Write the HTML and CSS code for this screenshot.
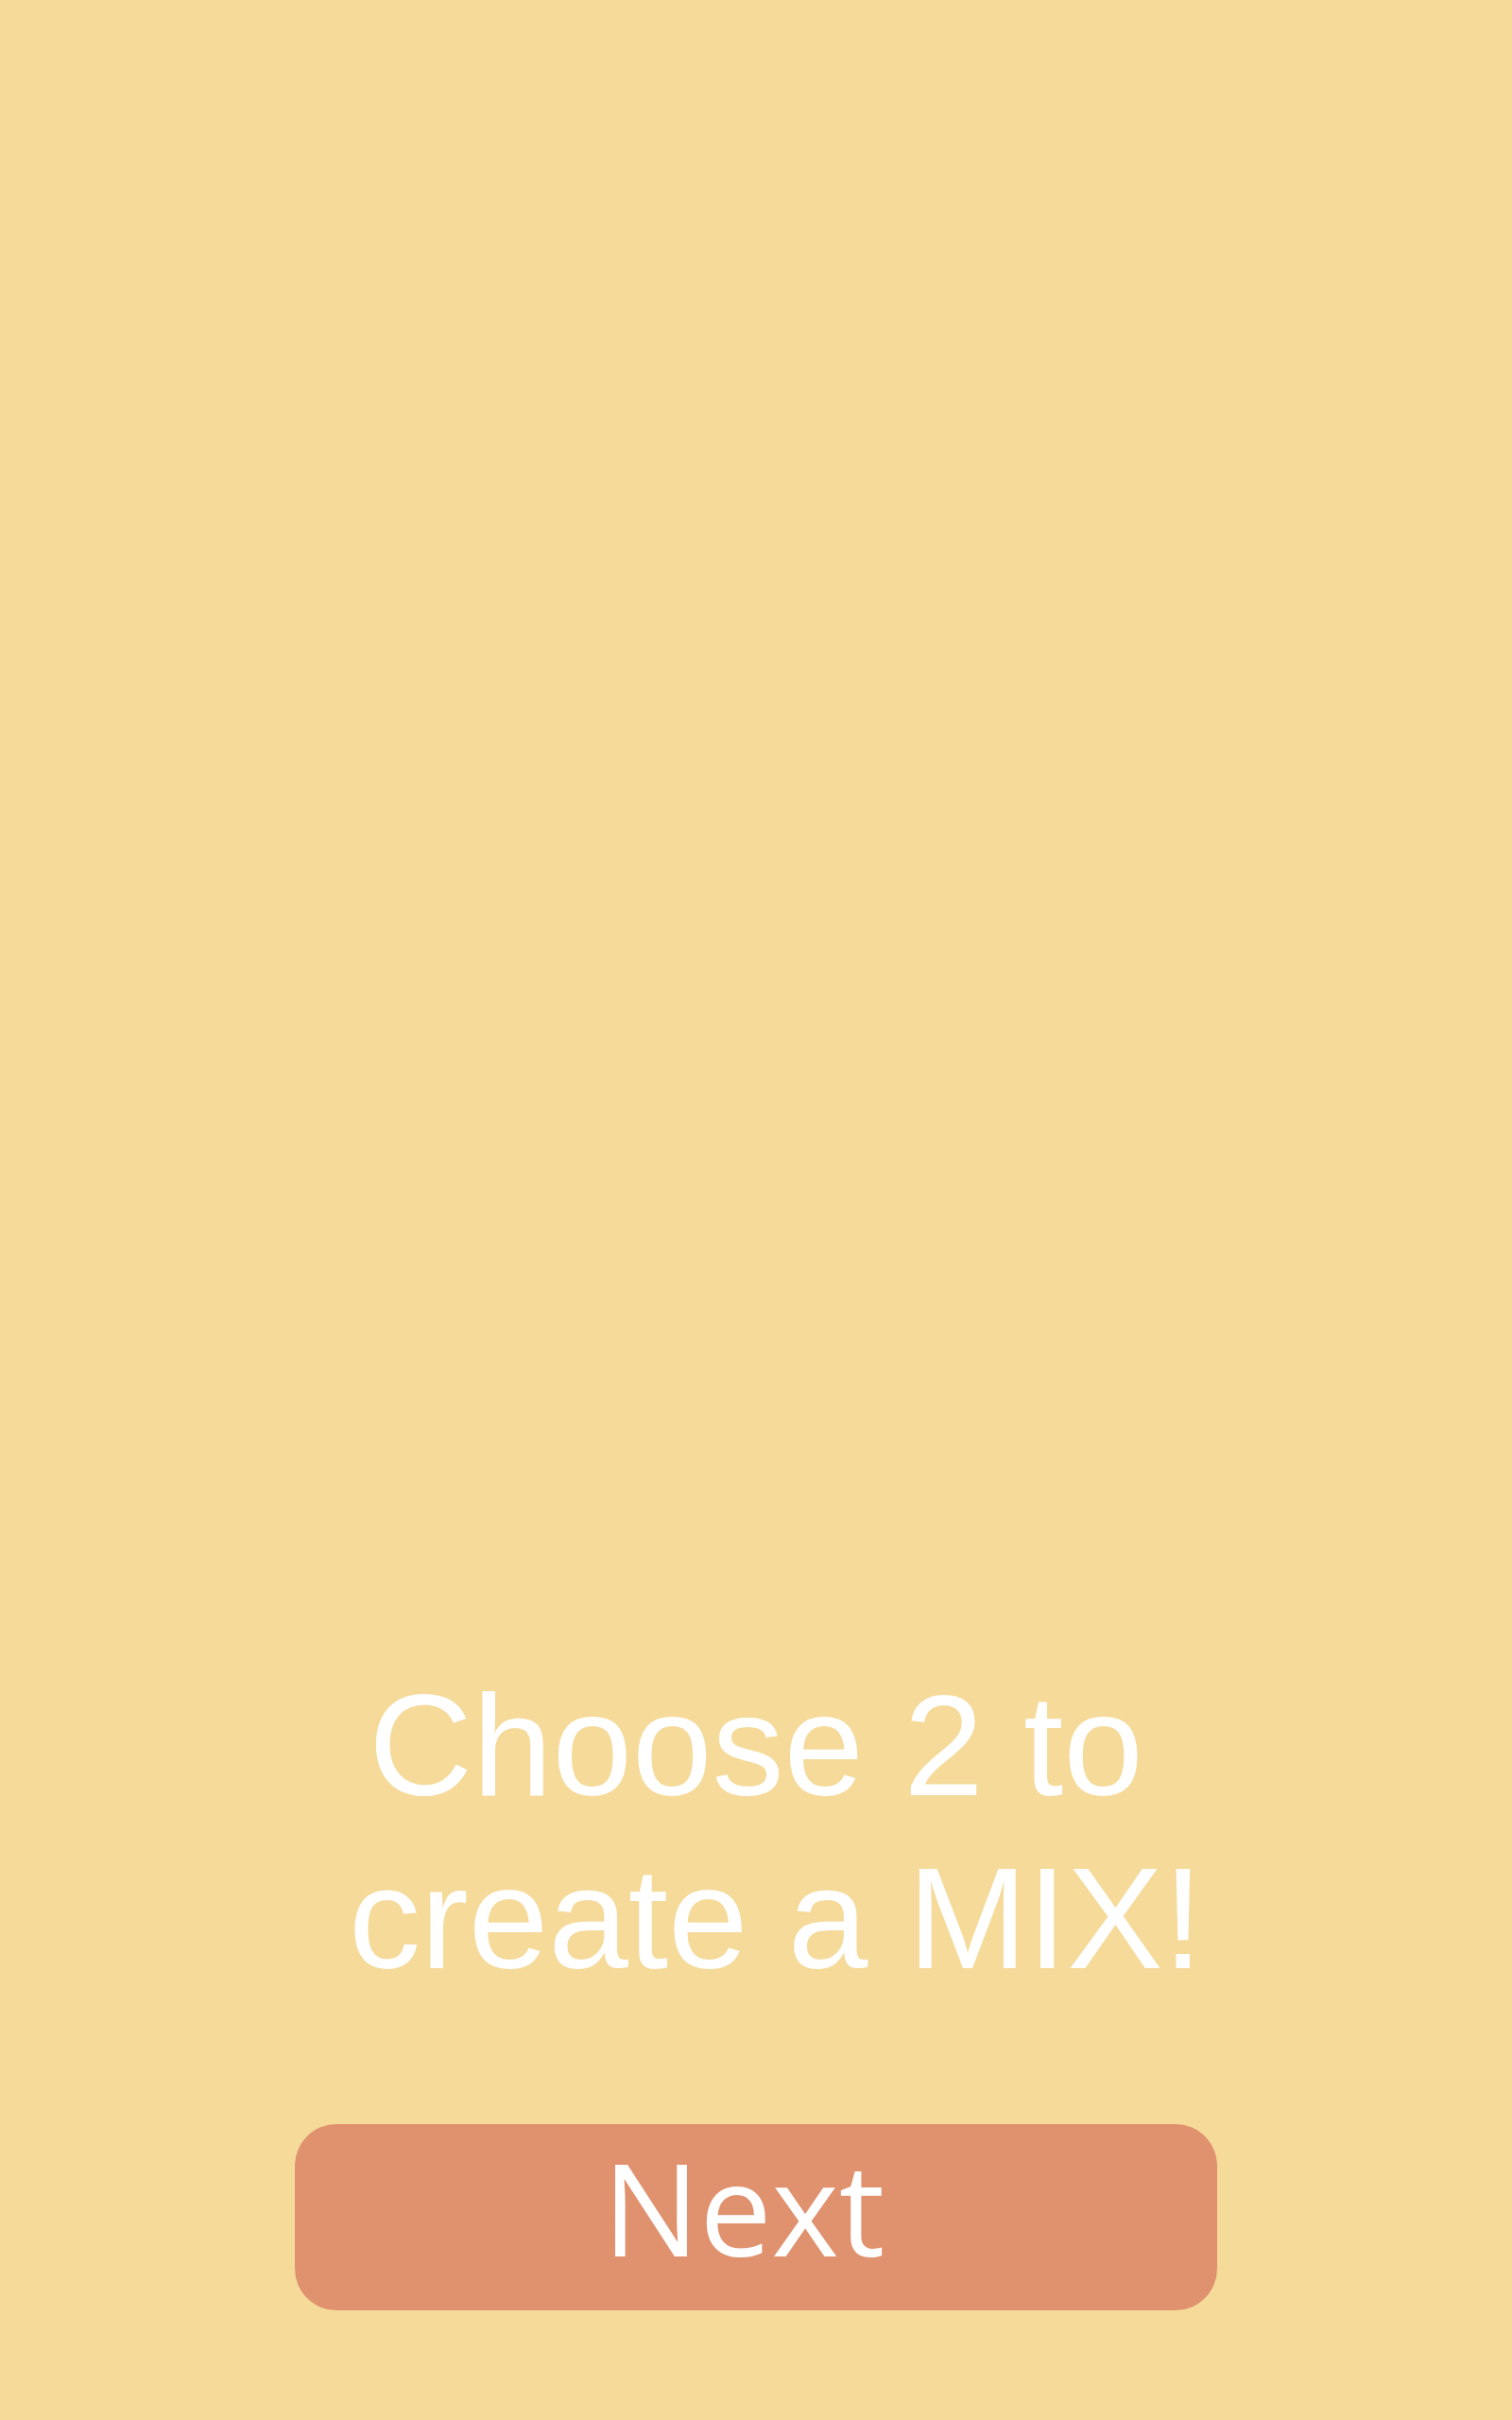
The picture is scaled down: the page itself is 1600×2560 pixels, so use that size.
FILE: index.html
```html
<!DOCTYPE html>
<html lang="en">
<head>
<meta charset="utf-8">
<title>Choose 2 to create a MIX!</title>
<link rel="stylesheet" href="styles.css">
</head>
<body>
<main class="screen">
  <h1 class="prompt">
    <span class="prompt-line">Choose 2 to</span>
    <span class="prompt-line prompt-line--second">create a MIX!</span>
  </h1>
  <button class="next-btn" type="button">Next</button>
</main>
</body>
</html>
```
FILE: styles.css
```css
html, body {
  margin: 0;
  padding: 0;
}
body {
  background: #F5DA9A;
}
.screen {
  box-sizing: border-box;
  width: 1600px;
  height: 2560px;
  display: flex;
  flex-direction: column;
  justify-content: flex-end;
  align-items: center;
  padding-bottom: 116px;
  gap: 127px;
}
.prompt {
  margin: 0;
  width: 976px;
  text-align: center;
  color: #ffffff;
  font-family: "Liberation Sans", Arial, sans-serif;
  font-weight: 400;
  font-size: 152px;
  line-height: 1.2;
}
.prompt-line {
  display: block;
}
.prompt-line--second {
  padding-left: 42px;
}
.next-btn {
  box-sizing: border-box;
  width: 976px;
  height: 197px;
  border: none;
  border-radius: 44px;
  background: #E0926F;
  color: #ffffff;
  font-family: "Open Sans", "Noto Sans", sans-serif;
  font-size: 136px;
  line-height: 1;
  padding: 20px 26px 41px 0;
  display: flex;
  justify-content: center;
  align-items: flex-start;
  cursor: pointer;
}
```
